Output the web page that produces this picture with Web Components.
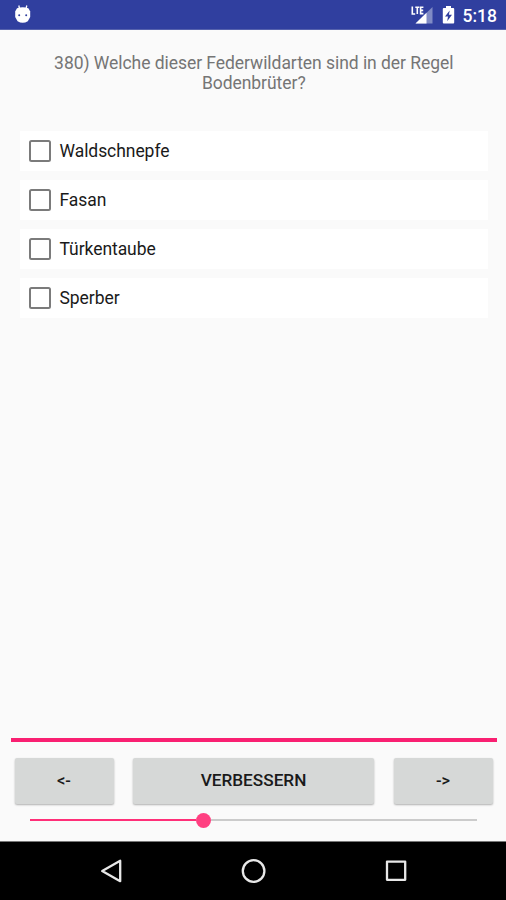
<!DOCTYPE html>
<html lang="de">
<head>
<meta charset="utf-8">
<title>Quiz</title>
<style>
html,body{margin:0;height:100%}
body{font-family:Roboto,"Liberation Sans",sans-serif;background:#fafafa;overflow:hidden}
</style>
</head>
<body>
<quiz-app></quiz-app>
<script>
const define = (name, html) => customElements.define(name, class extends HTMLElement {
  connectedCallback() {
    if (this.shadowRoot) return;
    const t = document.createElement('template');
    t.innerHTML = html;
    this.attachShadow({mode: 'open'}).append(t.content.cloneNode(true));
  }
});

define('status-bar', `
<style>
:host{display:flex;align-items:center;box-sizing:border-box;height:30px;padding:0 9px 0 13px;background:#303f9f;border-bottom:1px solid #5662ad;color:#fff}
svg{display:block;flex:none}
.space{flex:1}
.battery{margin:0 8px 0 9px}
span{font-size:17.5px;font-weight:500;line-height:20px;padding-top:3px}
</style>
<svg width="20" height="29" viewBox="0 0 20 29"><path d="M5.8 5.5L6.6 9M13.8 5.5L13 9" stroke="#fff" stroke-width="1.3"/><path d="M4 8.2Q9.7 6.5 15.4 8.2L17.2 11.5V17L14.8 21.2Q9.7 24.4 4.6 21.2L2.2 17V11.5Z" fill="#fff"/><circle cx="6.2" cy="15.2" r="1" fill="#303f9f"/><circle cx="13.2" cy="15.2" r="1" fill="#303f9f"/></svg>
<div class="space"></div>
<svg width="22" height="29" viewBox="0 0 22 29"><path d="M21.5 7V23.5H4.5Z" fill="#808bc5"/><path d="M15.5 12.8V23.5H4.5Z" fill="#fff"/><path d="M1.3 6.5V14H4.2M4.3 7.2H8.3M6.3 7.2V14M12.4 7.2H9.6V13.6H12.4M9.6 10.4H12.2" fill="none" stroke="#fff" stroke-width="1.6"/></svg>
<svg class="battery" width="13" height="29" viewBox="0 0 13 29"><path d="M4 6H9V8H11.3Q12.2 8 12.2 9V22.4Q12.2 23.4 11.3 23.4H1.8Q.8 23.4 .8 22.4V9Q.8 8 1.8 8H4Z" fill="#fff"/><path d="M7.7 10.5L3 16.5H6L5.2 21.2L10 14.8H6.9Z" fill="#303f9f"/></svg>
<span>5:18</span>`);

define('answer-option', `
<style>
:host{display:flex;align-items:center;height:40px;background:#fff;padding-left:8.5px;gap:9px;color:#1a1a1a;font-size:17.5px;letter-spacing:-.06px}
i{box-sizing:border-box;width:22px;height:22px;border:2px solid #7b7b7b;border-radius:2.5px;flex:none}
</style><i></i><span><slot></slot></span>`);

define('raised-button', `
<style>
:host{display:flex;align-items:center;justify-content:center;height:46.5px;background:#d6d8d7;border-radius:2px;box-shadow:0 1px 2px rgba(0,0,0,.3);color:#1a1a1a;font-size:17.2px;font-weight:500}
span{padding-bottom:1px}
:host([small]){font-size:16.4px}
:host([small]) span{padding:0}
</style><span><slot></slot></span>`);

define('progress-slider', `
<style>
:host{display:flex;align-items:center;height:16px}
.done{height:2px;background:#ff2f78;flex:none;width:166px}
.thumb{width:15px;height:15px;border-radius:50%;background:#ff4081;flex:none}
.rest{height:1.5px;background:#cbcbcb;flex:1}
</style><div class="done"></div><div class="thumb"></div><div class="rest"></div>`);

define('nav-bar', `
<style>
:host{display:block;box-sizing:border-box;height:59px;background:#000;border-top:1px solid #777}
svg{display:block}
</style>
<svg width="506" height="58" viewBox="0 0 506 58" fill="none" stroke="#e8e8e8" stroke-width="2.3" stroke-linejoin="round"><path d="M120.2 18.8V39.2L102.2 29Z"/><circle cx="253.6" cy="29" r="10.8"/><rect x="387" y="19.6" width="18.2" height="18.2"/></svg>`);

define('quiz-app', `
<style>
:host{display:flex;flex-direction:column;height:900px;width:506px;background:#fafafa}
h1{margin:23px 39px 0 40.5px;height:78px;font-weight:400;font-size:17.5px;letter-spacing:-.05px;line-height:20.3px;text-align:center;color:#757575}
.answers{display:flex;flex-direction:column;gap:9.15px;padding:0 18px 0 20px}
.space{flex:1}
.rule{height:4px;margin:0 9.5px 0 10.5px;background:#f91f71}
.buttons{display:grid;grid-template-columns:99px 241px 99px;gap:19.5px;margin:15.5px 0 0 14.5px}
progress-slider{margin:8px 29px 13px 30px}
</style>
<status-bar></status-bar>
<h1>380) Welche dieser Federwildarten sind in der Regel Bodenbrüter?</h1>
<div class="answers"><answer-option>Waldschnepfe</answer-option><answer-option>Fasan</answer-option><answer-option>Türkentaube</answer-option><answer-option>Sperber</answer-option></div>
<div class="space"></div>
<div class="rule"></div>
<div class="buttons"><raised-button small>&lt;-</raised-button><raised-button>VERBESSERN</raised-button><raised-button small>-&gt;</raised-button></div>
<progress-slider></progress-slider>
<nav-bar></nav-bar>`);
</script>
</body>
</html>
